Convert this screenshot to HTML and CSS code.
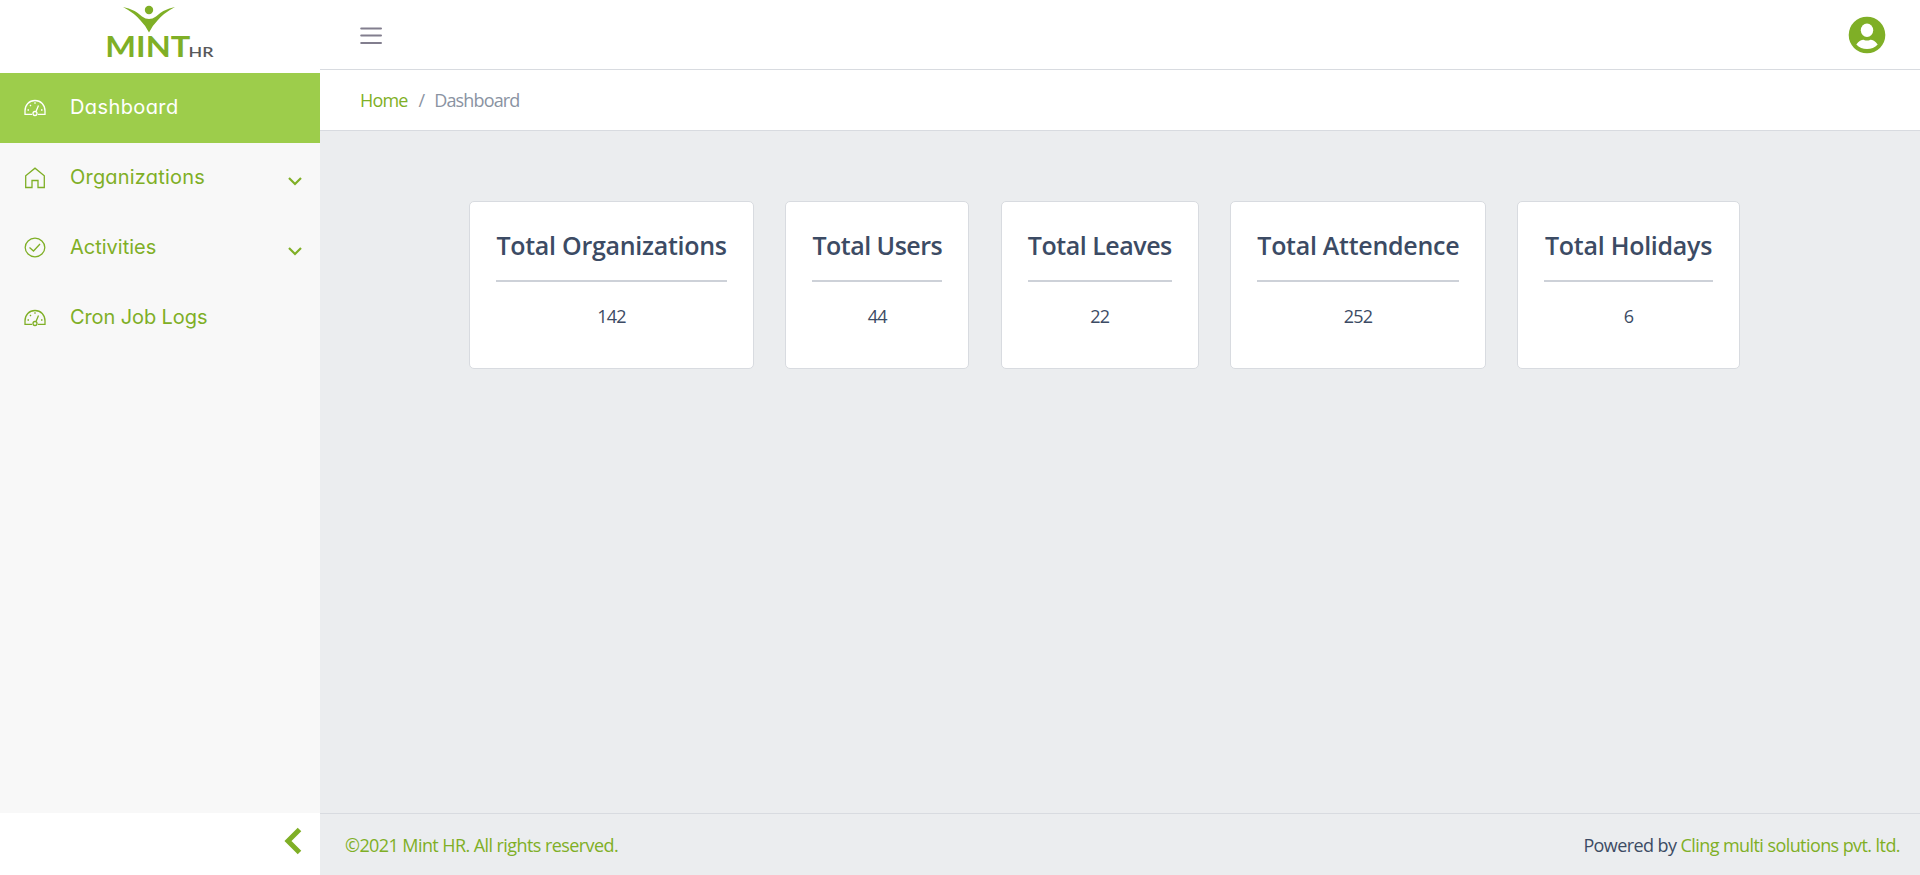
FILE: index.html
```html
<!DOCTYPE html>
<html lang="en">
<head>
<meta charset="utf-8">
<title>Mint HR Dashboard</title>
<link rel="stylesheet" href="styles.css">
</head>
<body>
<div class="app">
  <aside class="sidebar">
    <div class="brand">
      <svg width="112" height="64" viewBox="104 0 112 64">
        <circle class="leaf" cx="149" cy="10" r="4.2"/>
        <path class="leaf" d="M123 7Q135 9.500 142 16.500Q149 21.500 156 16.500Q163 9.500 175 7Q163 13.500 157.500 20.500Q152 26 149 32.500Q146 26 140.500 20.500Q135 13.500 123 7Z"/>
        <text class="logo-main" x="105.300" y="57" textLength="85" lengthAdjust="spacingAndGlyphs">MINT</text>
        <text class="logo-sub" x="188.500" y="57" textLength="25" lengthAdjust="spacingAndGlyphs">HR</text>
      </svg>
    </div>
    <nav class="menu">
      <a class="item active">
        <svg class="icon" viewBox="0 0 22 22"><path d="M8 17.300H1V14C1 8 5 3.500 11 3.500S21 8 21 14V17.300H14"/><circle cx="11" cy="16.500" r="2"/><path d="M12 14.500L14.500 8.500M10.300 6H11.700M6 8L7 9M3.500 13H5M17 13H18.500"/></svg>
        <span class="label w-dashboard">Dashboard</span>
      </a>
      <a class="item">
        <svg class="icon" viewBox="0 0 22 22"><path d="M1.700 20.500V8.800L11 1.200L20.300 8.800V20.500H14V13.500H8V20.500Z"/></svg>
        <span class="label w-org">Organizations</span>
        <svg class="chev" viewBox="0 0 16 10"><path d="M2 2L8 8L14 2"/></svg>
      </a>
      <a class="item">
        <svg class="icon" viewBox="0 0 22 22"><ellipse cx="11" cy="10.500" rx="9.800" ry="9.300"/><path d="M5.500 10.500L9.500 14L16 7"/></svg>
        <span class="label">Activities</span>
        <svg class="chev" viewBox="0 0 16 10"><path d="M2 2L8 8L14 2"/></svg>
      </a>
      <a class="item">
        <svg class="icon" viewBox="0 0 22 22"><path d="M8 17.300H1V14C1 8 5 3.500 11 3.500S21 8 21 14V17.300H14"/><circle cx="11" cy="16.500" r="2"/><path d="M12 14.500L14.500 8.500M10.300 6H11.700M6 8L7 9M3.500 13H5M17 13H18.500"/></svg>
        <span class="label w-cron">Cron Job Logs</span>
      </a>
    </nav>
    <div class="minimizer">
      <svg width="18" height="28" viewBox="0 0 18 28"><path d="M15.500 2.500L4 14L15.500 25.500"/></svg>
    </div>
  </aside>
  <div class="content">
    <header class="topbar">
      <svg class="burger" width="24" height="20" viewBox="0 0 24 20"><path d="M2.200 3.500H22M2.200 10.500H22M2.200 18H22"/></svg>
      <svg width="38" height="38" viewBox="0 0 38 38"><circle class="leaf" cx="19" cy="19" r="18.300"/><ellipse class="hole" cx="19" cy="14.300" rx="6.200" ry="6.700"/><path class="hole" d="M8.300 28.500C11 25 14 23.600 16 23.900Q19 25 22 23.900C24 23.600 27 25 29.700 28.500C27 31.500 23 33 19 33S11 31.500 8.300 28.500Z"/></svg>
    </header>
    <div class="crumbs"><a>Home</a><span class="slash">/</span><span class="here">Dashboard</span></div>
    <main class="main">
      <section class="card c1"><h4>Total Organizations</h4><hr><p>142</p></section>
      <section class="card c2"><h4>Total Users</h4><hr><p>44</p></section>
      <section class="card c3"><h4>Total Leaves</h4><hr><p>22</p></section>
      <section class="card c4"><h4>Total Attendence</h4><hr><p>252</p></section>
      <section class="card c5"><h4>Total Holidays</h4><hr><p>6</p></section>
    </main>
    <footer class="footer"><a>©2021 Mint HR. All rights reserved.</a><span>Powered by <a>Cling multi solutions pvt. ltd.</a></span></footer>
  </div>
</div>
</body>
</html>
```
FILE: styles.css
```css
* { box-sizing: border-box; }
body { margin: 0; font: 400 18px/27px "Open Sans", "Noto Sans", sans-serif; color: #3c4b64; background: #ebedef; }
a { color: #7faf26; }
.app { display: flex; height: 875px; }
.sidebar { width: 320px; display: flex; flex-direction: column; background: #f8f8f8; }
.brand { height: 73px; background: #fff; padding-left: 104px; }
.leaf { fill: #7faf26; }
.hole { fill: #fff; }
.logo-main { font: 700 29px Lato, sans-serif; fill: #7faf26; }
.logo-sub { font: 600 14px Lato, sans-serif; fill: #58595b; }
.menu { flex: 1; }
.item { display: flex; align-items: center; height: 70px; padding: 0 17px 0 24px; }
.item.active { background: #9dcd4b; color: #fff; }
.icon { width: 22px; height: 22px; margin: 0 24px 0 0; fill: none; stroke: currentColor; stroke-width: 1.3; }
.label { font: 400 20px/30px Inter, sans-serif; font-feature-settings: "cv11"; padding-bottom: 3px; white-space: nowrap; }
.w-dashboard { letter-spacing: 0.4px; }
.w-org { letter-spacing: 0.2px; }
.w-cron { letter-spacing: -0.1px; }
.chev { width: 16px; height: 10px; margin: 5px 0 0 auto; fill: none; stroke: #7faf26; stroke-width: 2.2; }
.minimizer { height: 62px; background: #fff; display: flex; justify-content: flex-end; padding: 14px 18px 0 0; }
.minimizer path { fill: none; stroke: #7faf26; stroke-width: 5; }
.content { flex: 1; display: flex; flex-direction: column; }
.topbar { height: 70px; background: #fff; border-bottom: 1px solid #d8dbe0; display: flex; justify-content: space-between; padding: 16px 34px 0 39px; }
.burger { margin-top: 9px; fill: none; stroke: #827e8e; stroke-width: 2; stroke-linecap: round; }
.crumbs { height: 61px; background: #fff; border-bottom: 1px solid #d8dbe0; display: flex; align-items: center; padding: 1px 0 0 40px; letter-spacing: -0.85px; }
.slash, .here { color: #8a93a2; }
.slash { margin: 0 10px 0 11px; }
.main { flex: 1; display: flex; align-items: flex-start; gap: 31.5px; padding: 70px 0 0 149.3px; }
.card { height: 168px; border: 1px solid #d8dbe0; border-radius: 5px; background: #fff; padding: 26px 26px; text-align: center; white-space: nowrap; }
.card h4 { margin: 0; font-size: 25px; line-height: 34px; font-weight: 600; }
.card hr { margin: 18px 0 21px; border: 0; height: 2px; background: #cdd1d8; }
.card p { margin: 0; letter-spacing: -0.8px; }
.c1 { width: 284.5px; letter-spacing: -0.28px; }
.c2 { width: 184px; letter-spacing: -0.5px; }
.c3 { width: 198px; letter-spacing: -0.48px; }
.c4 { width: 255.5px; letter-spacing: -0.28px; }
.c5 { width: 222.5px; letter-spacing: -0.27px; }
.footer { height: 62px; border-top: 1px solid #d8dbe0; display: flex; justify-content: space-between; align-items: center; padding: 2px 20px 0 25px; letter-spacing: -0.58px; }
```
